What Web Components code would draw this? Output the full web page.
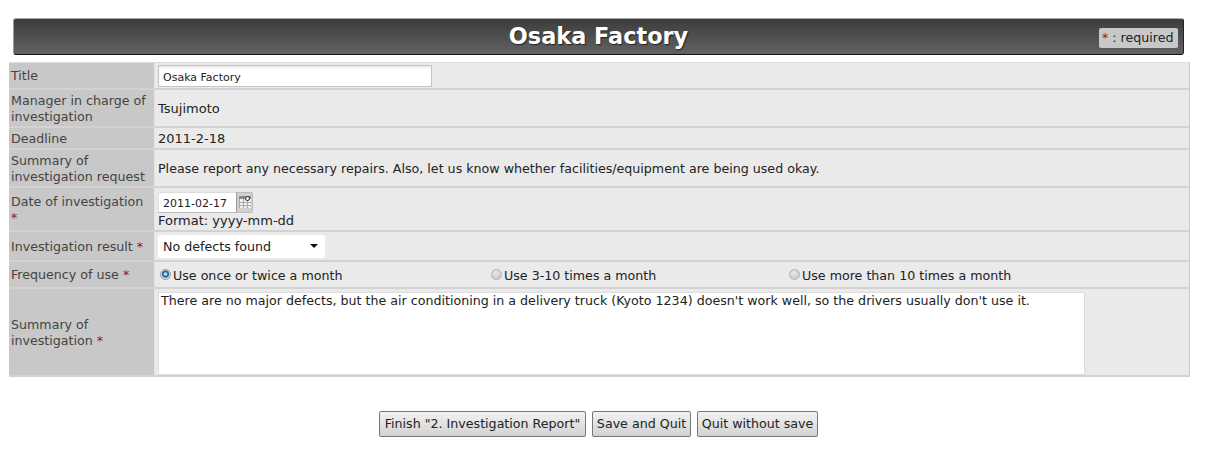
<!DOCTYPE html>
<html>
<head>
<meta charset="utf-8">
<title>Osaka Factory</title>
<style>
  html, body { margin: 0; background: #fff; }
  body { font: 12.65px "DejaVu Sans", sans-serif; color: #222; padding: 18px 18px 0 9px; }
  .wide { font-size: 13px; }
</style>
</head>
<body>
<page-banner title-text="Osaka Factory"></page-banner>
<form-table>
  <form-row label="Title" style="--h:27px;--lp:0"><text-box style="--w:274px">Osaka Factory</text-box></form-row>
  <form-row label="Manager in charge of investigation" style="--h:38px"><span class="wide">Tsujimoto</span></form-row>
  <form-row label="Deadline" style="--h:22px"><span class="wide">2011-2-18</span></form-row>
  <form-row label="Summary of investigation request" style="--h:38px">Please report any necessary repairs. Also, let us know whether facilities/equipment are being used okay.</form-row>
  <form-row label="Date of investigation" required top style="--h:44px">
    <date-box>2011-02-17</date-box>
    <div class="wide">Format: yyyy-mm-dd</div>
  </form-row>
  <form-row label="Investigation result" required style="--h:30px"><select-box>No defects found</select-box></form-row>
  <form-row label="Frequency of use" required style="--h:27px;--lp:0">
    <radio-group>
      <radio-item checked>Use once or twice a month</radio-item>
      <radio-item>Use 3-10 times a month</radio-item>
      <radio-item>Use more than 10 times a month</radio-item>
    </radio-group>
  </form-row>
  <form-row label="Summary of investigation" required style="--h:88px">
    <text-area-box>There are no major defects, but the air conditioning in a delivery truck (Kyoto 1234) doesn't work well, so the drivers usually don't use it.</text-area-box>
  </form-row>
</form-table>
<button-bar>
  <push-button style="width:207px">Finish "2. Investigation Report"</push-button>
  <push-button style="width:99px">Save and Quit</push-button>
  <push-button style="width:121px">Quit without save</push-button>
</button-bar>

<script>
// small helper, every element is just a shadow root with its own css
function define(name, html, setup) {
  customElements.define(name, class extends HTMLElement {
    constructor() {
      super();
      this.attachShadow({ mode: 'open' }).innerHTML = html;
    }
    connectedCallback() {
      if (setup) setup(this);
    }
  });
}

/* barra oscura del titulo */
define('page-banner', `
  <style>
    :host { display: block; margin: 0 6px 7px 4px; }
    .bar {
      height: 37px; box-sizing: border-box; position: relative;
      display: flex; align-items: center; justify-content: center;
      background: linear-gradient(#3c3c3c, #626262);
      border: 1px solid #222; border-top-color: #aaa; border-left-color: #999;
      border-bottom-color: #111; border-radius: 3px;
    }
    h1 { margin: 0 0 2px; font: bold 22.4px "DejaVu Sans", sans-serif; color: #fff; text-shadow: 1px 1px 1px #222; }
    .req {
      position: absolute; right: 5px; top: 9px; height: 20px; box-sizing: border-box; width: 79px; padding: 0 0 2px 3px;
      display: flex; align-items: center; white-space: pre;
      background: #c8c8c8; color: #222; border-radius: 2px;
    }
    .req b { color: #a01010; font-weight: normal; }
  </style>
  <div class="bar"><h1 id="t"></h1><div class="req"><b>*</b> : required</div></div>
`, el => { el.shadowRoot.getElementById('t').textContent = el.getAttribute('title-text'); });

define('form-table', `
  <style>
    :host { display: block; border-top: 1px solid #ddd; border-right: 1px solid #ccc; }
  </style>
  <slot></slot>
`);

define('form-row', `
  <style>
    :host { display: grid; grid-template-columns: 146px 1fr; height: var(--h); box-sizing: border-box; border-bottom: 2px solid #d2d2d2; }
    .label {
      background: #c8c8c8; color: #444; padding: var(--lp, 2px) 2px 0; line-height: 16px;
      display: flex; align-items: center; border-right: 1px solid #e4e4e4;
    }
    :host([top]) .label { align-items: flex-start; padding-top: 6px; }
    .label b { color: #a01010; font-weight: normal; }
    .value { background: #eaeaea; padding: 0 3px; display: flex; flex-direction: column; justify-content: center; align-items: flex-start; color: #222; }
  </style>
  <div class="label"><span><span id="l"></span><b id="r"></b></span></div>
  <div class="value"><slot></slot></div>
`, el => {
  el.shadowRoot.getElementById('l').textContent = el.getAttribute('label');
  if (el.hasAttribute('required')) el.shadowRoot.getElementById('r').textContent = ' *';
});

define('text-box', `
  <style>
    :host { display: block; width: var(--w); height: 22px; box-sizing: border-box; background: #fff; border: 1px solid #c4c4c4; padding: 0 4px; line-height: 23px; font-size: 11px; box-shadow: inset 0 2px 2px #eee; }
  </style>
  <slot></slot>
`);

define('date-box', `
  <style>
    :host { display: flex; height: 21px; box-sizing: border-box; margin-top: 1px; font-size: 11px; white-space: nowrap; }
    .in { width: 78px; box-sizing: border-box; background: #fff; padding: 0 4px; line-height: 22px; border: 1px solid #ddd; border-right: 0; border-bottom-color: #bbb; }
    .btn { width: 17px; box-sizing: border-box; background: #d0d0d0; border: 1px solid #bbb; border-left-color: #999; border-radius: 0 2px 2px 0; display: flex; justify-content: center; padding-top: 3px; }
  </style>
  <div class="in"><slot></slot></div>
  <div class="btn">
    <svg width="12" height="12" viewBox="0 0 12 12">
      <rect x="0" y="0" width="12" height="12" fill="#f2f2f2"/>
      <path d="M0 0h12v3H0z" fill="#8a8a8a"/>
      <path d="M.5 3v9M4.5 3v9M8.5 3v9M0 6.5h12M0 9.5h12" stroke="#aaa" fill="none"/>
      <circle cx="8.5" cy="2.5" r="2" fill="#fff" stroke="#222"/>
    </svg>
  </div>
`);

define('select-box', `
  <style>
    :host { display: flex; align-items: center; justify-content: space-between; width: 167px; height: 23px; box-sizing: border-box; background: #fff; padding: 0 5px; border-radius: 2px; }
    i { width: 0; height: 0; border: 4px solid transparent; border-top-color: #111; border-bottom: 0; margin-right: 2px; }
  </style>
  <span><slot></slot></span><i></i>
`);

define('radio-group', `
  <style>
    :host { display: grid; grid-template-columns: 331px 298px auto; width: 900px; padding-top: 2px; }
  </style>
  <slot></slot>
`);

define('radio-item', `
  <style>
    :host { display: flex; align-items: center; white-space: nowrap; }
    i { width: 11px; height: 11px; border-radius: 50%; margin: -2px 2px 0 2px; box-sizing: border-box; border: 1px solid #b4b4b4; background: radial-gradient(circle at 40% 30%, #e8e8e8, #c0c0c0); }
    :host([checked]) i { border-color: #9a9aa4; background: radial-gradient(circle at 50% 45%, #bfe0f4 0 1px, #1c5f96 2.5px 3px, #c8d4dc 4px); }
  </style>
  <i></i><slot></slot>
`);

define('text-area-box', `
  <style>
    :host { display: block; width: 927px; height: 83px; margin-top: 2px; box-sizing: border-box; background: #fff; border: 1px solid #ddd; padding: 0 2px; line-height: 15px; }
  </style>
  <slot></slot>
`);

define('button-bar', `
  <style>
    :host { display: flex; justify-content: center; gap: 6px; margin-top: 34px; margin-right: 2px; }
  </style>
  <slot></slot>
`);

define('push-button', `
  <style>
    :host {
      display: block; height: 26px; box-sizing: border-box; line-height: 24px; white-space: nowrap; text-align: center;
      border: 1px solid #777; border-radius: 2px; color: #222;
      background: linear-gradient(#f2f2f2, #d2d2d2);
    }
  </style>
  <slot></slot>
`);
</script>
</body>
</html>
